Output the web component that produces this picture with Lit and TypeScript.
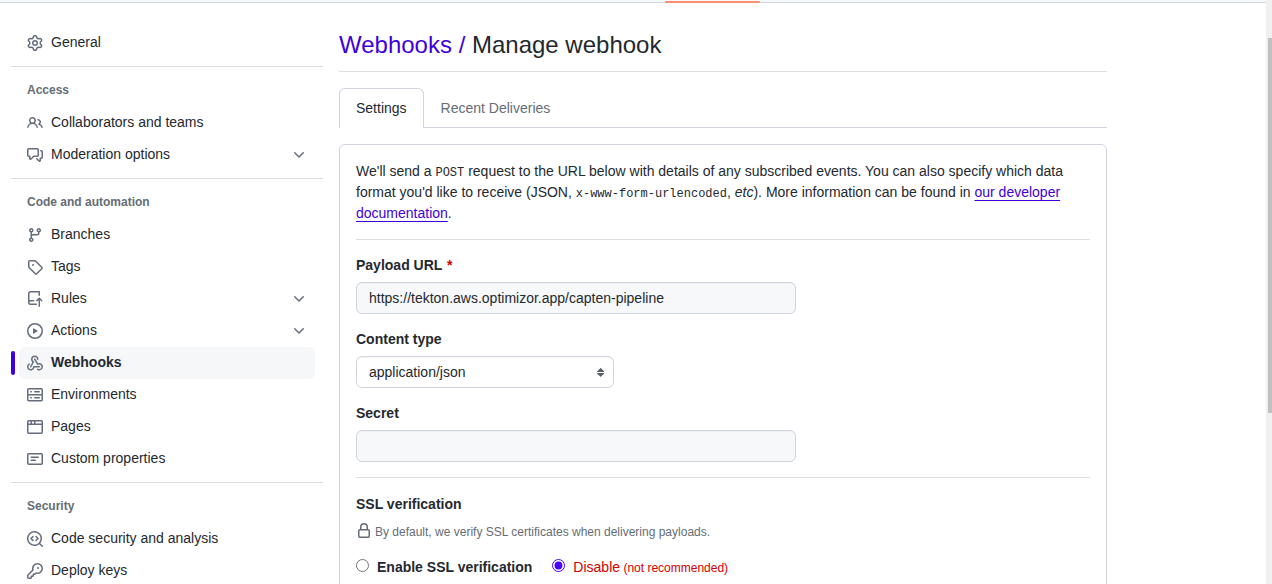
import { LitElement, html, css, svg, nothing } from "lit";
import { customElement, property, state } from "lit/decorators.js";
import { classMap } from "lit/directives/class-map.js";

const ICONS: Record<string, string[]> = {
  gear: [
    "M8 0a8.2 8.2 0 0 1 .701.031C9.444.095 9.99.645 10.16 1.29l.288 1.107c.018.066.079.158.212.224.231.114.454.243.668.386.123.082.233.09.299.071l1.103-.303c.644-.176 1.392.021 1.82.63.27.385.506.792.704 1.218.315.675.111 1.422-.364 1.891l-.814.806c-.049.048-.098.147-.088.294.016.257.016.515 0 .772-.01.147.038.246.088.294l.814.806c.475.469.679 1.216.364 1.891a7.977 7.977 0 0 1-.704 1.217c-.428.61-1.176.807-1.82.63l-1.102-.302c-.067-.019-.177-.011-.3.071a5.909 5.909 0 0 1-.668.386c-.133.066-.194.158-.211.224l-.29 1.106c-.168.646-.715 1.196-1.458 1.26a8.006 8.006 0 0 1-1.402 0c-.743-.064-1.289-.614-1.458-1.26l-.289-1.106c-.018-.066-.079-.158-.212-.224a5.738 5.738 0 0 1-.668-.386c-.123-.082-.233-.09-.299-.071l-1.103.303c-.644.176-1.392-.021-1.82-.63a8.12 8.12 0 0 1-.704-1.218c-.315-.675-.111-1.422.363-1.891l.815-.806c.05-.048.098-.147.088-.294a6.214 6.214 0 0 1 0-.772c.01-.147-.038-.246-.088-.294l-.815-.806C.635 6.045.431 5.298.746 4.623a7.92 7.92 0 0 1 .704-1.217c.428-.61 1.176-.807 1.82-.63l1.102.302c.067.019.177.011.3-.071.214-.143.437-.272.668-.386.133-.066.194-.158.211-.224l.29-1.106C6.009.645 6.556.095 7.299.03 7.53.01 7.764 0 8 0Zm-.571 1.525c-.036.003-.108.036-.137.146l-.289 1.105c-.147.561-.549.967-.998 1.189-.173.086-.34.183-.5.29-.417.278-.97.423-1.529.27l-1.103-.303c-.109-.03-.175.016-.195.045-.22.312-.412.644-.573.99-.014.031-.021.11.059.19l.815.806c.411.406.562.957.53 1.456a4.709 4.709 0 0 0 0 .582c.032.499-.119 1.05-.53 1.456l-.815.806c-.081.08-.073.159-.059.19.162.346.353.677.573.989.02.03.085.076.195.046l1.102-.303c.56-.153 1.113-.008 1.53.27.161.107.328.204.501.29.447.222.85.629.997 1.189l.289 1.105c.029.109.101.143.137.146a6.6 6.6 0 0 0 1.142 0c.036-.003.108-.036.137-.146l.289-1.105c.147-.561.549-.967.998-1.189.173-.086.34-.183.5-.29.417-.278.97-.423 1.529-.27l1.103.303c.109.029.175-.016.195-.045.22-.313.411-.644.573-.99.014-.031.021-.11-.059-.19l-.815-.806c-.411-.406-.562-.957-.53-1.456a4.709 4.709 0 0 0 0-.582c-.032-.499.119-1.05.53-1.456l.815-.806c.081-.08.073-.159.059-.19a6.464 6.464 0 0 0-.573-.989c-.02-.03-.085-.076-.195-.046l-1.102.303c-.56.153-1.113.008-1.53-.27a4.44 4.44 0 0 0-.501-.29c-.447-.222-.85-.629-.997-1.189l-.289-1.105c-.029-.11-.101-.143-.137-.146a6.6 6.6 0 0 0-1.142 0ZM11 8a3 3 0 1 1-6 0 3 3 0 0 1 6 0ZM9.5 8a1.5 1.5 0 1 0-3.001.001A1.5 1.5 0 0 0 9.5 8Z",
  ],
  people: [
    "M2 5.5a3.5 3.5 0 1 1 5.898 2.549 5.508 5.508 0 0 1 3.034 4.084.75.75 0 1 1-1.482.235 4 4 0 0 0-7.9 0 .75.75 0 0 1-1.482-.236A5.507 5.507 0 0 1 3.102 8.05 3.493 3.493 0 0 1 2 5.5ZM11 4a3.001 3.001 0 0 1 2.22 5.018 5.01 5.01 0 0 1 2.56 3.012.749.749 0 0 1-.885.954.752.752 0 0 1-.549-.514 3.507 3.507 0 0 0-2.522-2.372.75.75 0 0 1-.574-.73v-.352a.75.75 0 0 1 .416-.672A1.5 1.5 0 0 0 11 5.5.75.75 0 0 1 11 4Zm-5.5-.5a2 2 0 1 0-.001 3.999A2 2 0 0 0 5.5 3.5Z",
  ],
  discussion: [
    "M1.75 1h8.5c.966 0 1.75.784 1.75 1.75v5.5A1.75 1.75 0 0 1 10.25 10H7.061l-2.574 2.573A1.458 1.458 0 0 1 2 11.543V10h-.25A1.75 1.75 0 0 1 0 8.25v-5.5C0 1.784.784 1 1.75 1ZM1.5 2.75v5.5c0 .138.112.25.25.25h1a.75.75 0 0 1 .75.75v2.19l2.72-2.72a.749.749 0 0 1 .53-.22h3.5a.25.25 0 0 0 .25-.25v-5.5a.25.25 0 0 0-.25-.25h-8.5a.25.25 0 0 0-.25.25Zm13 2a.25.25 0 0 0-.25-.25h-.5a.75.75 0 0 1 0-1.5h.5c.966 0 1.75.784 1.75 1.75v5.5A1.75 1.75 0 0 1 14.25 12H14v1.543a1.458 1.458 0 0 1-2.487 1.03L9.22 12.28a.749.749 0 0 1 .326-1.275.749.749 0 0 1 .734.215l2.22 2.22v-2.19a.75.75 0 0 1 .75-.75h1a.25.25 0 0 0 .25-.25Z",
  ],
  branch: [
    "M9.5 3.25a2.25 2.25 0 1 1 3 2.122V6A2.5 2.5 0 0 1 10 8.5H6a1 1 0 0 0-1 1v1.128a2.251 2.251 0 1 1-1.5 0V5.372a2.25 2.25 0 1 1 1.5 0v1.836A2.493 2.493 0 0 1 6 7h4a1 1 0 0 0 1-1v-.628A2.25 2.25 0 0 1 9.5 3.25Zm-6 0a.75.75 0 1 0 1.5 0 .75.75 0 0 0-1.5 0Zm8.25-.75a.75.75 0 1 0 0 1.5.75.75 0 0 0 0-1.5ZM4.25 12a.75.75 0 1 0 0 1.5.75.75 0 0 0 0-1.5Z",
  ],
  tag: [
    "M1 7.775V2.75C1 1.784 1.784 1 2.75 1h5.025c.464 0 .91.184 1.238.513l6.25 6.25a1.75 1.75 0 0 1 0 2.474l-5.026 5.026a1.75 1.75 0 0 1-2.474 0l-6.25-6.25A1.752 1.752 0 0 1 1 7.775Zm1.5 0c0 .066.026.13.073.177l6.25 6.25a.25.25 0 0 0 .354 0l5.025-5.025a.25.25 0 0 0 0-.354l-6.25-6.25a.25.25 0 0 0-.177-.073H2.75a.25.25 0 0 0-.25.25ZM6 5a1 1 0 1 1 0 2 1 1 0 0 1 0-2Z",
  ],
  push: [
    "M1 2.5A2.5 2.5 0 0 1 3.5 0h8.75a.75.75 0 0 1 .75.75v3.5a.75.75 0 0 1-1.5 0V1.5h-8a1 1 0 0 0-1 1v6.708A2.493 2.493 0 0 1 3.5 9h3.25a.75.75 0 0 1 0 1.5H3.5a1 1 0 0 0 0 2h5.75a.75.75 0 0 1 0 1.5H3.5A2.5 2.5 0 0 1 1 11.5Zm13.23 7.79h-.001l-1.224-1.224v6.184a.75.75 0 0 1-1.5 0V9.066L10.28 10.29a.75.75 0 0 1-1.06-1.061l2.505-2.504a.75.75 0 0 1 1.06 0L15.29 9.23a.751.751 0 0 1-.018 1.042.751.751 0 0 1-1.042.018Z",
  ],
  play: [
    "M8 0a8 8 0 1 1 0 16A8 8 0 0 1 8 0ZM1.5 8a6.5 6.5 0 1 0 13 0 6.5 6.5 0 0 0-13 0Zm4.879-2.773 4.264 2.559a.25.25 0 0 1 0 .428l-4.264 2.559A.25.25 0 0 1 6 10.559V5.442a.25.25 0 0 1 .379-.215Z",
  ],
  webhook: [
    "M5.5 4.25a2.25 2.25 0 0 1 4.5 0 .75.75 0 0 0 1.5 0 3.75 3.75 0 1 0-6.14 2.889l-2.272 4.258a.75.75 0 0 0 1.324.706L7 7.25a.75.75 0 0 0-.309-1.015A2.25 2.25 0 0 1 5.5 4.25Z",
    "M7.364 3.607a.75.75 0 0 1 1.03.257l2.608 4.349a3.75 3.75 0 1 1-.628 6.785.75.75 0 0 1 .752-1.299 2.25 2.25 0 1 0-.033-3.88.75.75 0 0 1-1.03-.256L7.107 4.636a.75.75 0 0 1 .257-1.03Z",
    "M2.9 8.776A.75.75 0 0 1 2.625 9.8 2.25 2.25 0 1 0 6 11.75a.75.75 0 0 1 .75-.751h5.5a.75.75 0 0 1 0 1.5H7.425a3.751 3.751 0 1 1-5.55-3.998.75.75 0 0 1 1.024.274Z",
  ],
  server: [
    "M1.75 1h12.5c.966 0 1.75.784 1.75 1.75v4c0 .372-.116.717-.314 1 .198.283.314.628.314 1v4a1.75 1.75 0 0 1-1.75 1.75H1.75A1.75 1.75 0 0 1 0 12.75v-4c0-.358.109-.707.314-1a1.739 1.739 0 0 1-.314-1v-4C0 1.784.784 1 1.75 1ZM1.5 2.75v4c0 .138.112.25.25.25h12.5a.25.25 0 0 0 .25-.25v-4a.25.25 0 0 0-.25-.25H1.75a.25.25 0 0 0-.25.25Zm.25 5.75a.25.25 0 0 0-.25.25v4c0 .138.112.25.25.25h12.5a.25.25 0 0 0 .25-.25v-4a.25.25 0 0 0-.25-.25ZM7 4.75A.75.75 0 0 1 7.75 4h4.5a.75.75 0 0 1 0 1.5h-4.5A.75.75 0 0 1 7 4.75ZM7.75 10h4.5a.75.75 0 0 1 0 1.5h-4.5a.75.75 0 0 1 0-1.5ZM3 4.75A.75.75 0 0 1 3.75 4h.5a.75.75 0 0 1 0 1.5h-.5A.75.75 0 0 1 3 4.75ZM3.75 10h.5a.75.75 0 0 1 0 1.5h-.5a.75.75 0 0 1 0-1.5Z",
  ],
  browser: [
    "M0 2.75C0 1.784.784 1 1.75 1h12.5c.966 0 1.75.784 1.75 1.75v10.5A1.75 1.75 0 0 1 14.25 15H1.75A1.75 1.75 0 0 1 0 13.25ZM14.5 6h-13v7.25c0 .138.112.25.25.25h12.5a.25.25 0 0 0 .25-.25Zm-6-3.5v2h6V2.75a.25.25 0 0 0-.25-.25ZM5 2.5v2h2v-2Zm-3.25 0a.25.25 0 0 0-.25.25V4.5h2v-2Z",
  ],
  note: [
    "M0 3.75C0 2.784.784 2 1.75 2h12.5c.966 0 1.75.784 1.75 1.75v8.5A1.75 1.75 0 0 1 14.25 14H1.75A1.75 1.75 0 0 1 0 12.25Zm1.75-.25a.25.25 0 0 0-.25.25v8.5c0 .138.112.25.25.25h12.5a.25.25 0 0 0 .25-.25v-8.5a.25.25 0 0 0-.25-.25ZM3.5 6.25a.75.75 0 0 1 .75-.75h7a.75.75 0 0 1 0 1.5h-7a.75.75 0 0 1-.75-.75Zm.75 2.25h4a.75.75 0 0 1 0 1.5h-4a.75.75 0 0 1 0-1.5Z",
  ],
  codescan: [
    "M8.47 4.97a.75.75 0 0 0 0 1.06L9.94 7.5 8.47 8.97a.75.75 0 1 0 1.06 1.06l2-2a.75.75 0 0 0 0-1.06l-2-2a.75.75 0 0 0-1.06 0ZM6.53 6.03a.75.75 0 0 0-1.06-1.06l-2 2a.75.75 0 0 0 0 1.06l2 2a.75.75 0 1 0 1.06-1.06L5.06 7.5l1.47-1.47Z",
    "M12.246 13.307a7.501 7.501 0 1 1 1.06-1.06l2.474 2.473a.749.749 0 0 1-.326 1.275.749.749 0 0 1-.734-.215ZM1.5 7.5a6.002 6.002 0 0 0 3.608 5.504 6.002 6.002 0 0 0 6.486-1.117.748.748 0 0 1 .292-.293A6 6 0 1 0 1.5 7.5Z",
  ],
  key: [
    "M10.5 0a5.499 5.499 0 1 1-1.288 10.848l-.932.932a.749.749 0 0 1-.53.22H7v.75a.749.749 0 0 1-.22.53l-.5.5a.749.749 0 0 1-.53.22H5v.75a.749.749 0 0 1-.22.53l-.5.5a.749.749 0 0 1-.53.22h-2A1.75 1.75 0 0 1 0 14.25v-2c0-.199.079-.389.22-.53l4.932-4.932A5.5 5.5 0 0 1 10.5 0Zm-4 5.5c-.001.431.069.86.205 1.269a.75.75 0 0 1-.181.768L1.5 12.56v1.69c0 .138.112.25.25.25h1.69l.06-.06v-1.19a.75.75 0 0 1 .75-.75h1.19l.06-.06v-1.19a.75.75 0 0 1 .75-.75h1.19l1.023-1.025a.75.75 0 0 1 .768-.18A4 4 0 1 0 6.5 5.5ZM11 6a1 1 0 1 1 0-2 1 1 0 0 1 0 2Z",
  ],
  chevron: [
    "M12.78 5.22a.749.749 0 0 1 0 1.06l-4.25 4.25a.749.749 0 0 1-1.06 0L3.22 6.28a.749.749 0 1 1 1.06-1.06L8 8.939l3.72-3.719a.749.749 0 0 1 1.06 0Z",
  ],
  lock: [
    "M4 4a4 4 0 0 1 8 0v2h.25c.966 0 1.75.784 1.75 1.75v5.5A1.75 1.75 0 0 1 12.25 15h-8.5A1.75 1.75 0 0 1 2 13.25v-5.5C2 6.784 2.784 6 3.75 6H4Zm8.25 3.5h-8.5a.25.25 0 0 0-.25.25v5.5c0 .138.112.25.25.25h8.5a.25.25 0 0 0 .25-.25v-5.5a.25.25 0 0 0-.25-.25ZM10.5 6V4a2.5 2.5 0 1 0-5 0v2Z",
  ],
};

interface NavItem {
  label: string;
  icon: string;
  expandable?: boolean;
  current?: boolean;
}

interface NavGroup {
  title?: string;
  items: NavItem[];
}

const GROUPS: NavGroup[] = [
  { items: [{ label: "General", icon: "gear" }] },
  {
    title: "Access",
    items: [
      { label: "Collaborators and teams", icon: "people" },
      { label: "Moderation options", icon: "discussion", expandable: true },
    ],
  },
  {
    title: "Code and automation",
    items: [
      { label: "Branches", icon: "branch" },
      { label: "Tags", icon: "tag" },
      { label: "Rules", icon: "push", expandable: true },
      { label: "Actions", icon: "play", expandable: true },
      { label: "Webhooks", icon: "webhook", current: true },
      { label: "Environments", icon: "server" },
      { label: "Pages", icon: "browser" },
      { label: "Custom properties", icon: "note" },
    ],
  },
  {
    title: "Security",
    items: [
      { label: "Code security and analysis", icon: "codescan" },
      { label: "Deploy keys", icon: "key" },
    ],
  },
];

@customElement("oct-icon")
class OctIcon extends LitElement {
  @property() name = "";

  static styles = css`
    :host {
      display: block;
      flex: none;
      width: 16px;
      height: 16px;
    }
    svg {
      display: block;
      fill: currentColor;
    }
  `;

  render() {
    return html`<svg width="16" height="16" viewBox="0 0 16 16" aria-hidden="true">
      ${(ICONS[this.name] ?? []).map((d) => svg`<path d=${d}></path>`)}
    </svg>`;
  }
}

@customElement("settings-nav")
class SettingsNav extends LitElement {
  static styles = css`
    :host {
      display: block;
      color: #24292f;
      font-size: 14px;
      line-height: 20px;
    }
    .group + .group {
      margin-top: 7px;
      border-top: 1px solid #d8dbe6;
    }
    .title {
      margin: 0;
      padding: 14px 16px 8px;
      color: #656d76;
      font-size: 12px;
      font-weight: 600;
      line-height: 18px;
    }
    .list {
      margin: 0;
      padding: 0 8px;
      list-style: none;
    }
    .entry {
      position: relative;
    }
    .item {
      box-sizing: border-box;
      display: flex;
      align-items: flex-start;
      gap: 8px;
      width: 100%;
      padding: 5px 8px 7px;
      border: 0;
      border-radius: 6px;
      background: none;
      color: inherit;
      font: inherit;
      text-align: left;
      text-decoration: none;
      cursor: pointer;
    }
    .item:hover,
    .current {
      background: #f6f7f9;
    }
    .current {
      font-weight: 600;
    }
    .entry:has(.current)::before {
      content: "";
      position: absolute;
      top: 4px;
      bottom: 4px;
      left: -8px;
      width: 4px;
      border-radius: 2px;
      background: #4000db;
    }
    .label {
      flex: 1;
    }
    .icon {
      margin-top: 3px;
      color: #656d7c;
    }
  `;

  private renderItem(item: NavItem) {
    const body = html`
      <oct-icon class="icon" name=${item.icon}></oct-icon>
      <span class="label">${item.label}</span>
      ${item.expandable ? html`<oct-icon class="icon" name="chevron"></oct-icon>` : nothing}
    `;
    return html`<li class="entry">
      ${item.expandable
        ? html`<button class="item" type="button" aria-expanded="false">${body}</button>`
        : html`<a
            class=${classMap({ item: true, current: !!item.current })}
            href="#"
            aria-current=${item.current ? "page" : nothing}
            >${body}</a
          >`}
    </li>`;
  }

  render() {
    return html`<nav aria-label="Repository settings">
      ${GROUPS.map(
        (group) => html`<section class="group">
          ${group.title ? html`<h3 class="title">${group.title}</h3>` : nothing}
          <ul class="list">
            ${group.items.map((item) => this.renderItem(item))}
          </ul>
        </section>`
      )}
    </nav>`;
  }
}

@customElement("webhook-form")
class WebhookForm extends LitElement {
  @state() private verify = false;

  static styles = css`
    :host {
      display: block;
      color: #24292f;
      font-size: 14px;
      line-height: 21px;
    }
    .panel {
      padding: 16px 16px 48px;
      border: 1px solid #d0d4e0;
      border-radius: 6px;
    }
    .intro {
      margin: 0;
    }
    .code {
      font-family: "Liberation Mono", monospace;
      font-size: 12px;
      line-height: 12px;
    }
    .link {
      color: #4000db;
      text-decoration: underline;
      text-underline-offset: 3px;
      text-decoration-skip-ink: none;
    }
    .rule {
      height: 1px;
      margin: 15px 0;
      border: 0;
      background: #dcdee4;
    }
    .field {
      display: flex;
      flex-direction: column;
      align-items: flex-start;
      gap: 6px;
      margin-top: 15px;
    }
    .label,
    .legend {
      font-weight: 600;
    }
    .required {
      margin-left: 1px;
      color: #d50000;
    }
    .control {
      box-sizing: border-box;
      height: 32px;
      padding: 5px 12px;
      border: 1px solid #d0d4e0;
      border-radius: 6px;
      color: inherit;
      font: inherit;
      line-height: 20px;
      box-shadow: inset 0 1px 0 rgba(208, 215, 222, 0.2);
      outline: none;
    }
    .control:focus {
      border-color: #4000db;
    }
    .text {
      width: 100%;
      max-width: 440px;
      background: #f6f8fa;
    }
    .select {
      width: 258px;
      max-width: 100%;
      appearance: none;
      background: #fff
        url("data:image/svg+xml,%3Csvg xmlns='http://www.w3.org/2000/svg' width='16' height='16' fill='%23586069'%3E%3Cpath d='m4.074 9.427 3.396 3.396a.25.25 0 0 0 .354 0l3.396-3.396A.25.25 0 0 0 11.043 9H4.251a.25.25 0 0 0-.177.427zm0-1.957L7.47 4.073a.25.25 0 0 1 .354 0L11.22 7.47a.25.25 0 0 1-.177.426H4.251a.25.25 0 0 1-.177-.426z'/%3E%3C/svg%3E")
        no-repeat right 4px center;
    }
    .ssl {
      margin: 0;
      padding: 0;
      border: 0;
    }
    .legend {
      padding: 1px 0 0;
    }
    .note {
      display: flex;
      gap: 3px;
      margin: 8px 0 0;
      color: #656d76;
      font-size: 12px;
      line-height: 18px;
    }
    .choices {
      display: flex;
      gap: 20px;
      margin-top: 16px;
    }
    .choice {
      display: flex;
      align-items: flex-start;
      gap: 8px;
    }
    .radio {
      width: 13px;
      height: 13px;
      margin: 2px 0 0;
      accent-color: #4a00ff;
    }
    .strong {
      font-weight: 600;
    }
    .danger {
      color: #d50000;
    }
    .hint {
      font-size: 12px;
    }
  `;

  render() {
    return html`<form class="panel">
      <p class="intro">
        We'll send a <code class="code">POST</code> request to the URL below with details of any
        subscribed events. You can also specify which data format you'd like to receive (JSON,
        <code class="code">x-www-form-urlencoded</code>, <em>etc</em>). More information can be
        found in <a class="link" href="#">our developer documentation</a>.
      </p>
      <hr class="rule" />
      <div class="field">
        <label class="label" for="url">Payload URL <span class="required">*</span></label>
        <input
          class="control text"
          id="url"
          type="text"
          required
          .value=${"https://tekton.aws.optimizor.app/capten-pipeline"}
        />
      </div>
      <div class="field">
        <label class="label" for="type">Content type</label>
        <select class="control select" id="type">
          <option selected>application/json</option>
          <option>application/x-www-form-urlencoded</option>
        </select>
      </div>
      <div class="field">
        <label class="label" for="secret">Secret</label>
        <input class="control text" id="secret" type="password" autocomplete="off" />
      </div>
      <hr class="rule" />
      <fieldset class="ssl">
        <legend class="legend">SSL verification</legend>
        <p class="note">
          <oct-icon name="lock"></oct-icon>
          <span>By default, we verify SSL certificates when delivering payloads.</span>
        </p>
        <div class="choices">
          <div class="choice">
            <input
              class="radio"
              id="ssl-on"
              type="radio"
              name="ssl"
              .checked=${this.verify}
              @change=${() => (this.verify = true)}
            />
            <label class="strong" for="ssl-on">Enable SSL verification</label>
          </div>
          <div class="choice">
            <input
              class="radio"
              id="ssl-off"
              type="radio"
              name="ssl"
              .checked=${!this.verify}
              @change=${() => (this.verify = false)}
            />
            <label class="danger" for="ssl-off"
              >Disable<span class="hint"> (not recommended)</span></label
            >
          </div>
        </div>
      </fieldset>
    </form>`;
  }
}

@customElement("app-root")
class AppRoot extends LitElement {
  static styles = css`
    :host {
      display: grid;
      grid-template-columns: minmax(0, 1fr) 6px;
      height: 100vh;
      overflow: hidden;
      background: #fff;
      color: #24292f;
      font-family: "Liberation Sans", Arial, sans-serif;
      font-size: 14px;
    }
    .page {
      min-width: 0;
      overflow: hidden;
    }
    .topbar {
      position: relative;
      height: 2px;
      border-bottom: 1px solid #d0d7de;
      background: #f6f8fa;
    }
    .marker {
      position: absolute;
      top: 1px;
      left: 52.5%;
      width: 95px;
      height: 2px;
      border-radius: 1px;
      background: #fd8c73;
    }
    .layout {
      display: flex;
      align-items: flex-start;
      gap: 16px;
      padding: 24px 16px 0 11px;
    }
    .side {
      flex: none;
      width: 312px;
    }
    .main {
      flex: 1;
      min-width: 0;
      max-width: 768px;
    }
    .heading {
      margin: 0 0 16px;
      padding-bottom: 8px;
      border-bottom: 1px solid #dcdee4;
      font-size: 24px;
      font-weight: 400;
      line-height: 36px;
    }
    .crumb {
      color: #4000db;
      text-decoration: none;
    }
    .tabs {
      display: flex;
      margin-bottom: 16px;
      border-bottom: 1px solid #d0d4e0;
    }
    .tab {
      margin-bottom: -1px;
      padding: 8px 16px;
      border: 1px solid transparent;
      border-bottom: 0;
      color: #656d76;
      line-height: 23px;
      text-decoration: none;
    }
    .selected {
      border-color: #d0d4e0;
      border-radius: 6px 6px 0 0;
      background: #fff;
      color: #24292f;
    }
    .track {
      display: grid;
      grid-template-rows: 38fr 375fr 171fr;
      padding-left: 2px;
      background: #f0f0f0;
    }
    .thumb {
      grid-row: 2;
      background: #c1c1c1;
    }
  `;

  render() {
    return html`
      <div class="page">
        <header class="topbar"><div class="marker"></div></header>
        <div class="layout">
          <settings-nav class="side"></settings-nav>
          <main class="main">
            <h2 class="heading"><a class="crumb" href="#">Webhooks /</a> Manage webhook</h2>
            <nav class="tabs" aria-label="Webhook">
              <a class="tab selected" href="#" aria-current="page">Settings</a>
              <a class="tab" href="#">Recent Deliveries</a>
            </nav>
            <webhook-form></webhook-form>
          </main>
        </div>
      </div>
      <div class="track" aria-hidden="true"><div class="thumb"></div></div>
    `;
  }
}
